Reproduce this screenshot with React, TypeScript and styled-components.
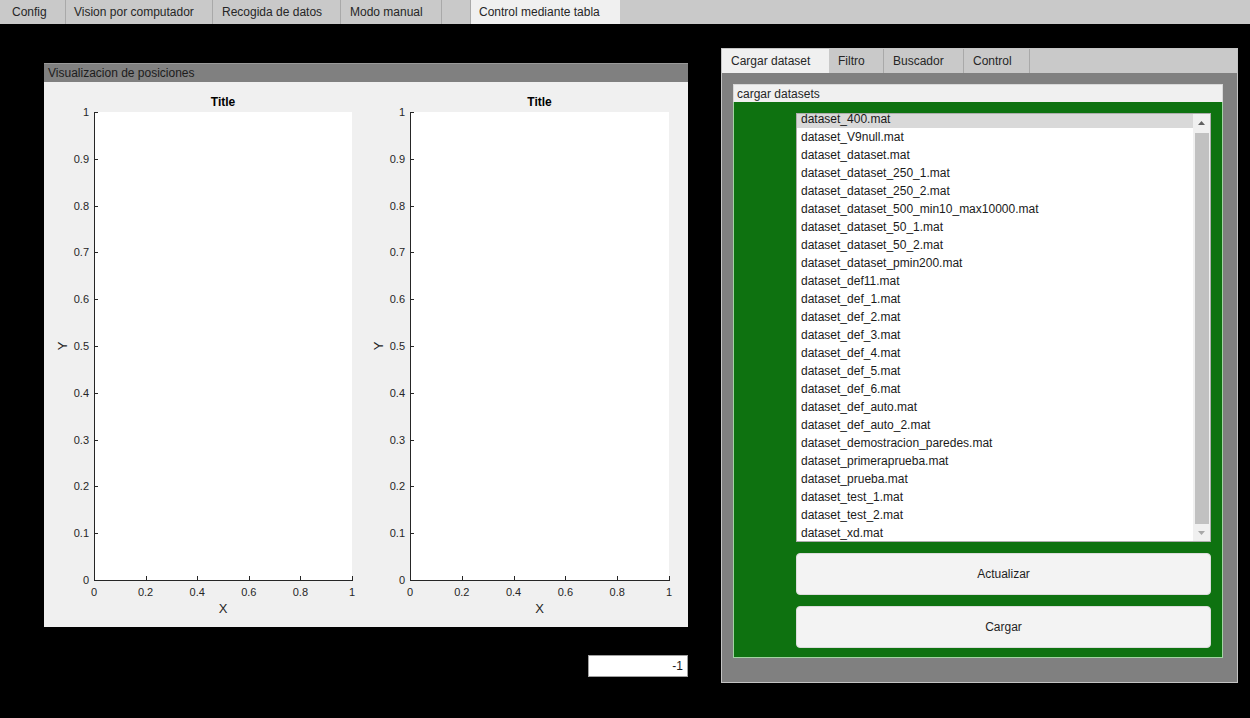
import styled, { createGlobalStyle } from 'styled-components';

const GlobalStyle = createGlobalStyle`
  html, body {
    margin: 0;
    padding: 0;
    background: #000;
  }
  body {
    font-family: 'Liberation Sans', Arial, sans-serif;
    font-size: 12px;
    color: #262626;
  }
`;

const Screen = styled.div`
  width: 1250px;
  height: 718px;
  display: flex;
  flex-direction: column;
  background: #000;
  overflow: hidden;
`;

const TabStrip = styled.div<{ $height: number }>`
  display: flex;
  flex-shrink: 0;
  height: ${(p) => p.$height}px;
  background: #c9c9c9;
`;

const Tab = styled.div<{ $width: number; $active?: boolean; $pad?: number }>`
  width: ${(p) => p.$width}px;
  box-sizing: border-box;
  padding-left: ${(p) => p.$pad ?? 8}px;
  display: flex;
  align-items: center;
  white-space: nowrap;
  background: ${(p) => (p.$active ? '#f0f0f0' : 'transparent')};
  border-right: 1px solid ${(p) => (p.$active ? '#f0f0f0' : '#a9a9a9')};
  color: #262626;
`;

const Workspace = styled.div`
  display: flex;
  align-items: flex-start;
  flex: 1;
`;

const LeftColumn = styled.div`
  display: flex;
  flex-direction: column;
  width: 644px;
  margin: 39px 0 0 44px;
`;

const Panel = styled.section`
  height: 564px;
  display: flex;
  flex-direction: column;
  background: #f0f0f0;
`;

const PanelHeader = styled.div`
  height: 19px;
  line-height: 19px;
  padding-left: 4px;
  background: #808080;
  color: #1c1c1c;
  border-top: 1px solid #9a9a9a;
  box-sizing: border-box;
`;

const PlotRow = styled.div`
  display: flex;
  flex: 1;
`;

const NumberField = styled.input`
  align-self: flex-end;
  width: 100px;
  height: 22px;
  margin-top: 28px;
  box-sizing: border-box;
  border: 1px solid #a0a0a0;
  background: #fff;
  text-align: right;
  padding: 0 4px;
  font: inherit;
  color: #1a1a1a;
  outline: none;
`;

const ControlPanel = styled.section`
  width: 517px;
  height: 635px;
  margin: 24px 0 0 33px;
  box-sizing: border-box;
  border: 1px solid #c4c4c4;
  background: #808080;
  display: flex;
  flex-direction: column;
`;

const ControlBody = styled.div`
  padding: 11px 15px 0 11px;
`;

const GroupBox = styled.div`
  width: 490px;
  display: flex;
  flex-direction: column;
`;

const GroupTitle = styled.div`
  height: 18px;
  line-height: 18px;
  padding-left: 3px;
  background: #f0f0f0;
  border: 1px solid #d8d8d8;
  border-bottom: none;
  box-sizing: border-box;
`;

const GreenArea = styled.div`
  height: 556px;
  box-sizing: border-box;
  background: #0e7210;
  border: 1px solid #a3d4a3;
  border-top: none;
  padding: 11px 11px 0 62px;
  display: flex;
  flex-direction: column;
  gap: 11px;
`;

const ListBox = styled.div`
  height: 429px;
  box-sizing: border-box;
  border: 1px solid #adadad;
  background: #fff;
  display: flex;
  overflow: hidden;
`;

// list is scrolled a few pixels down, so the first row is partly hidden
const ListItems = styled.div`
  flex: 1;
  margin-top: -4px;
`;

const ListItem = styled.div<{ $selected?: boolean }>`
  height: 18px;
  line-height: 18px;
  padding-left: 4px;
  white-space: nowrap;
  color: #1a1a1a;
  background: ${(p) => (p.$selected ? '#d9d9d9' : 'transparent')};
`;

const ScrollBar = styled.div`
  width: 17px;
  display: flex;
  flex-direction: column;
  background: #f0f0f0;
`;

const ScrollArrow = styled.div`
  height: 17px;
  display: flex;
  align-items: center;
  justify-content: center;
  flex-shrink: 0;
`;

const ScrollThumb = styled.div`
  flex: 1;
  margin: 2px 1px 0 2px;
  background: #c1c1c1;
`;

const ActionButton = styled.button`
  height: 42px;
  box-sizing: border-box;
  border: 1px solid #dcdcdc;
  border-radius: 4px;
  background: #f3f3f3;
  font: inherit;
  color: #1f1f1f;
  cursor: pointer;
`;

const topTabs = [
  { label: 'Config', width: 66, pad: 12 },
  { label: 'Vision por computador', width: 147 },
  { label: 'Recogida de datos', width: 128, pad: 9 },
  { label: 'Modo manual', width: 101, pad: 9 },
  { label: '', width: 29 },
  { label: 'Control mediante tabla', width: 149, active: true },
];

const subTabs = [
  { label: 'Cargar dataset', width: 107, active: true },
  { label: 'Filtro', width: 55 },
  { label: 'Buscador', width: 80 },
  { label: 'Control', width: 66 },
];

const datasets = [
  'dataset_400.mat',
  'dataset_V9null.mat',
  'dataset_dataset.mat',
  'dataset_dataset_250_1.mat',
  'dataset_dataset_250_2.mat',
  'dataset_dataset_500_min10_max10000.mat',
  'dataset_dataset_50_1.mat',
  'dataset_dataset_50_2.mat',
  'dataset_dataset_pmin200.mat',
  'dataset_def11.mat',
  'dataset_def_1.mat',
  'dataset_def_2.mat',
  'dataset_def_3.mat',
  'dataset_def_4.mat',
  'dataset_def_5.mat',
  'dataset_def_6.mat',
  'dataset_def_auto.mat',
  'dataset_def_auto_2.mat',
  'dataset_demostracion_paredes.mat',
  'dataset_primeraprueba.mat',
  'dataset_prueba.mat',
  'dataset_test_1.mat',
  'dataset_test_2.mat',
  'dataset_xd.mat',
];

const yTicks = [0, 0.1, 0.2, 0.3, 0.4, 0.5, 0.6, 0.7, 0.8, 0.9, 1];
const xTicks = [0, 0.2, 0.4, 0.6, 0.8, 1];

// MATLAB-style empty axes
const Plot = ({ boxWidth }: { boxWidth: number }) => {
  const left = 50;
  const top = 30;
  const bottom = 498;
  const h = bottom - top;
  const axis = '#262626';
  const fmt = (v: number) => (v === 0 || v === 1 ? String(v) : v.toFixed(1));

  return (
    <svg width={316} height={545} style={{ display: 'block' }}>
      <rect x={left} y={top} width={boxWidth} height={h} fill="#fff" />
      <text x={left + boxWidth / 2} y={20} textAnchor="middle" dominantBaseline="central" fontSize={12} fontWeight="bold" fill="#000" fontFamily="Liberation Sans, Arial, sans-serif">
        Title
      </text>
      <g shapeRendering="crispEdges" stroke={axis} strokeWidth={1}>
        <line x1={left + 0.5} y1={top} x2={left + 0.5} y2={bottom + 1} />
        <line x1={left} y1={bottom + 0.5} x2={left + boxWidth + 1} y2={bottom + 0.5} />
        {yTicks.map((v) => {
          const y = Math.round(bottom - v * h) + 0.5;
          return <line key={`y${v}`} x1={left} y1={y} x2={left + 4} y2={y} />;
        })}
        {xTicks.map((v) => {
          const x = Math.round(left + v * boxWidth) + 0.5;
          return <line key={`x${v}`} x1={x} y1={bottom + 1} x2={x} y2={bottom - 4} />;
        })}
      </g>
      <g fontSize={11} fill={axis} fontFamily="Liberation Sans, Arial, sans-serif">
        {yTicks.map((v) => (
          <text key={`yl${v}`} x={left - 5} y={bottom - v * h} textAnchor="end" dominantBaseline="central">
            {fmt(v)}
          </text>
        ))}
        {xTicks.map((v) => (
          <text key={`xl${v}`} x={left + v * boxWidth} y={510} textAnchor="middle" dominantBaseline="central">
            {fmt(v)}
          </text>
        ))}
      </g>
      <text x={left + boxWidth / 2} y={526} textAnchor="middle" dominantBaseline="central" fontSize={13} fill={axis} fontFamily="Liberation Sans, Arial, sans-serif">
        X
      </text>
      <text x={18} y={264} textAnchor="middle" dominantBaseline="central" fontSize={13} fill={axis} transform="rotate(-90 18 264)" fontFamily="Liberation Sans, Arial, sans-serif">
        Y
      </text>
    </svg>
  );
};

const Arrow = ({ up, color }: { up?: boolean; color: string }) => (
  <svg width={7} height={4}>
    <polygon points={up ? '0,4 3.5,0 7,4' : '0,0 7,0 3.5,4'} fill={color} />
  </svg>
);

const App = () => {
  return (
    <>
      <GlobalStyle />
      <Screen>
        <TabStrip $height={24}>
          {topTabs.map((t, i) => (
            <Tab key={i} $width={t.width} $pad={t.pad} $active={t.active}>
              {t.label}
            </Tab>
          ))}
        </TabStrip>
        <Workspace>
          <LeftColumn>
            <Panel>
              <PanelHeader>Visualizacion de posiciones</PanelHeader>
              <PlotRow>
                <Plot boxWidth={258} />
                <Plot boxWidth={259} />
              </PlotRow>
            </Panel>
            <NumberField defaultValue="-1" />
          </LeftColumn>
          <ControlPanel>
            <TabStrip $height={24}>
              {subTabs.map((t) => (
                <Tab key={t.label} $width={t.width} $pad={9} $active={t.active}>
                  {t.label}
                </Tab>
              ))}
            </TabStrip>
            <ControlBody>
              <GroupBox>
                <GroupTitle>cargar datasets</GroupTitle>
                <GreenArea>
                  <ListBox>
                    <ListItems>
                      {datasets.map((d, i) => (
                        <ListItem key={d} $selected={i === 0}>
                          {d}
                        </ListItem>
                      ))}
                    </ListItems>
                    <ScrollBar>
                      <ScrollArrow>
                        <Arrow up color="#606060" />
                      </ScrollArrow>
                      <ScrollThumb />
                      <ScrollArrow>
                        <Arrow color="#a8a8a8" />
                      </ScrollArrow>
                    </ScrollBar>
                  </ListBox>
                  <ActionButton>Actualizar</ActionButton>
                  <ActionButton>Cargar</ActionButton>
                </GreenArea>
              </GroupBox>
            </ControlBody>
          </ControlPanel>
        </Workspace>
      </Screen>
    </>
  );
};

export default App;
